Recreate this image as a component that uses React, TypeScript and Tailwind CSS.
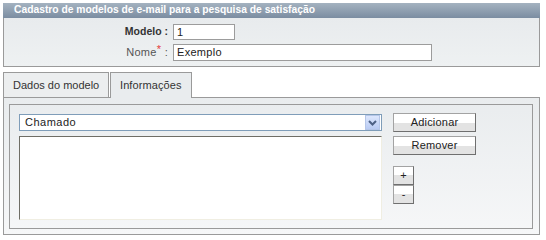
const font = "font-['Liberation_Sans',Arial,sans-serif]";

function Btn({ label, className }: { label: string; className: string }) {
  return (
    <div
      className={`flex items-center justify-center border border-[#a3a3a3] border-b-[#6f6f6f] border-r-[#6f6f6f] bg-[linear-gradient(#ffffff_0%,#ffffff_50%,#e3e3e3_50%,#e3e3e3_100%)] text-[11px] text-[#222] ${className}`}
    >
      {label}
    </div>
  );
}

export default function App() {
  return (
    <div className={`h-[239px] w-[546px] bg-white pl-[3px] pt-[3px] ${font}`}>
      <div className="w-[537px]">
        <div className="flex h-[15px] items-center bg-[linear-gradient(#a4b2c0,#7b8da1)] pl-[11px] text-[10.3px] font-bold leading-none text-white">
          Cadastro de modelos de e-mail para a pesquisa de satisfação
        </div>
        <div className="h-[49px] border border-t-0 border-[#9a9a9a] bg-[linear-gradient(#e8ebed,#eef1f2)] pt-[6px]">
          <div className="flex h-[16px] items-center">
            <div className="w-[169px] pr-[5px] text-right text-[10.5px] font-bold text-[#333]">Modelo :</div>
            <div className="flex h-[16px] w-[62px] items-center border border-[#9c9c9c] bg-white pl-[3px] text-[11px] text-[#222]">1</div>
          </div>
          <div className="mt-[4px] flex h-[17px] items-center">
            <div className="w-[169px] pr-[5px] text-right text-[11px] tracking-[0.3px] text-[#555]">
              Nome<span className="relative -top-[3px] text-[#e43b3b]">*</span> :
            </div>
            <div className="flex h-[17px] w-[259px] items-center border border-[#9c9c9c] bg-white pl-[3px] text-[11px] tracking-[0.3px] text-[#222]">Exemplo</div>
          </div>
        </div>

        <div className="mt-[5px] flex h-[25px] items-start gap-px">
          <div className="flex h-[25px] w-[106px] items-center border border-b-0 border-[#9a9a9a] bg-[#eceeef] pl-[9px] text-[11px] text-[#333]">
            Dados do modelo
          </div>
          <div className="relative z-10 flex h-[26px] w-[82px] items-center border border-b-0 border-[#9a9a9a] bg-[#e9ecee] pb-px pl-[9px] text-[11px] tracking-[0.1px] text-[#333]">
            Informações
          </div>
        </div>

        <div className="h-[138px] border border-[#9a9a9a] bg-[linear-gradient(#e9ecee,#f6f7f8)] pb-[5px] pl-[5px] pr-[6px] pt-[6px]">
          <div className="flex h-[125px] border border-[#9a9a9a] pl-[9px] pt-[9px]">
            <div className="flex w-[363px] flex-col">
              <div className="flex h-[17px] items-center justify-between border border-[#7f9db9] bg-white pl-[5px] pr-px text-[11px] tracking-[0.5px] text-[#222]">
                <span>Chamado</span>
                <div className="flex h-[15px] w-[15px] items-center justify-center border border-[#b5c6e8] bg-[linear-gradient(#dde7fd,#b9cbf3)]">
                  <svg width="9" height="6" viewBox="0 0 9 6">
                    <path d="M1 1 L4.5 4.5 L8 1" fill="none" stroke="#4d6185" strokeWidth="2" />
                  </svg>
                </div>
              </div>
              <div className="mt-[5px] h-[84px] border border-[#f0eee2] border-l-[#6f6e66] border-t-[#6f6e66] bg-white" />
            </div>
            <div className="ml-[11px] flex w-[83px] flex-col">
              <Btn label="Adicionar" className="-mt-px h-[19px] w-[83px] tracking-[0.2px]" />
              <Btn label="Remover" className="mt-[4px] h-[19px] w-[83px] tracking-[0.2px]" />
              <Btn label="+" className="mt-[11px] h-[19px] w-[21px]" />
              <Btn label="-" className="h-[19px] w-[21px]" />
            </div>
          </div>
        </div>
      </div>
    </div>
  );
}
